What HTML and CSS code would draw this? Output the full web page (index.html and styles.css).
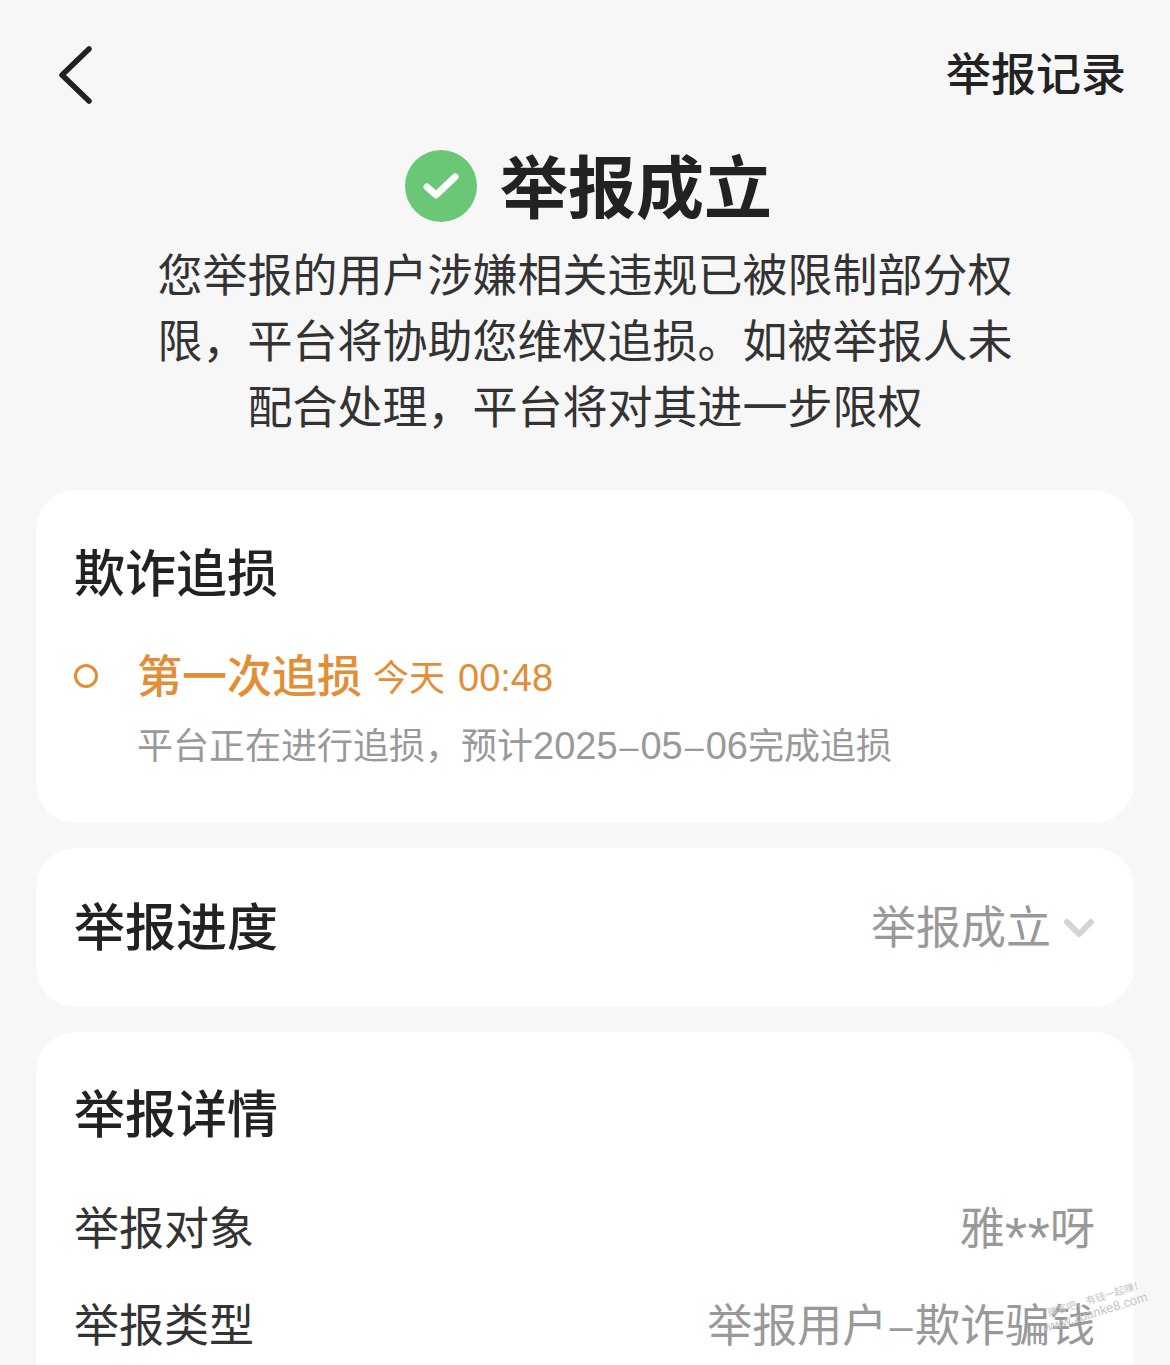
FILE: index.html
```html
<!DOCTYPE html>
<html lang="zh-CN">
<head>
    <meta charset="UTF-8">
    <title>举报成立</title>
    <link rel="stylesheet" href="styles.css">
</head>
<body>
    <div class="page">
        <div class="topbar">
            <svg class="back" width="36" height="60" viewBox="0 0 36 60">
                <path d="M32 4 L5 30 L32 56" fill="none" stroke="#222" stroke-width="5.5" stroke-linecap="round" stroke-linejoin="round"/>
            </svg>
            <span class="records">举报记录</span>
        </div>

        <div class="result">
            <svg width="72" height="72" viewBox="0 0 72 72">
                <circle cx="36" cy="36" r="36" fill="#69c776"/>
                <path d="M22 37 L31 45 L50 27" fill="none" stroke="#fff" stroke-width="7" stroke-linecap="round" stroke-linejoin="round"/>
            </svg>
            <h1>举报成立</h1>
        </div>
        <p class="desc">您举报的用户涉嫌相关违规已被限制部分权<br>限，平台将协助您维权追损。如被举报人未<br>配合处理，平台将对其进一步限权</p>

        <div class="card track">
            <h2>欺诈追损</h2>
            <div class="step">
                <span class="dot"></span>
                <span class="step-name">第一次追损</span>
                <span class="step-time">今天 <span class="digits clock">00:48</span></span>
            </div>
            <div class="step-note">平台正在进行追损，预计<span class="digits">2025<span class="date-dash">–</span>05<span class="date-dash">–</span>06</span>完成追损</div>
        </div>

        <div class="card progress">
            <h2>举报进度</h2>
            <div class="progress-val">
                <span class="progress-text">举报成立</span>
                <svg width="32" height="22" viewBox="0 0 32 22">
                    <path d="M4 5 L16 17 L28 5" fill="none" stroke="#d4d4d4" stroke-width="6" stroke-linecap="round" stroke-linejoin="round"/>
                </svg>
            </div>
        </div>

        <div class="card details">
            <h2>举报详情</h2>
            <div class="row"><span>举报对象</span><span class="val">雅<span class="stars">**</span>呀</span></div>
            <div class="row"><span>举报类型</span><span class="val">举报用户<span class="dash">–</span>欺诈骗钱</span></div>
        </div>

        <div class="mark"><span class="mark-top">赚客吧，有钱一起赚！</span><br>www.zuanke8.com</div>
    </div>
</body>
</html>
```

FILE: styles.css
```css
* {
    box-sizing: border-box;
}
html, body {
    margin: 0;
    padding: 0;
}
body {
    font-family: "Liberation Sans", "Noto Sans CJK SC", sans-serif;
    background-color: #f7f7f7;
    color: #222;
}
.page {
    position: relative;
    height: 1365px;
    overflow: hidden;
    padding: 0 36px;
}
.topbar {
    display: flex;
    justify-content: space-between;
    align-items: center;
    height: 60px;
    margin-top: 45px;
    padding: 0 8px 0 21px;
}
.records {
    font-size: 45px;
    font-weight: 500;
    padding-bottom: 8px;
}
.result {
    display: flex;
    justify-content: center;
    align-items: center;
    gap: 23px;
    margin-top: 45px;
    height: 72px;
    padding-left: 7px;
}
.result h1 {
    margin: 0;
    padding-top: 6px;
    font-size: 68px;
    font-weight: 700;
    line-height: 72px;
}
.desc {
    margin: 22px 0 0;
    text-align: center;
    font-size: 45px;
    line-height: 66px;
    color: #333;
}
.card {
    background-color: white;
    border-radius: 40px;
    padding: 0 39px 0 38px;
    margin-top: 25px;
}
.card h2 {
    margin: 0;
    font-size: 51px;
    font-weight: 500;
    line-height: 60px;
}
.track {
    height: 333px;
    margin-top: 48px;
    padding-top: 55px;
}
.step {
    display: flex;
    align-items: center;
    margin-top: 39px;
    height: 58px;
}
.dot {
    width: 24px;
    height: 24px;
    margin-top: 5px;
    border: 3px solid #e38d36;
    border-radius: 50%;
}
.step-name {
    margin-left: 39px;
    font-size: 45px;
    font-weight: 500;
    color: #e38d36;
}
.step-time {
    margin-left: 11px;
    padding-top: 4px;
    font-size: 36px;
    color: #e38d36;
}
.digits {
    font-size: 38px;
}
.clock {
    margin-left: 3px;
}
.date-dash {
    margin: 0 2px;
    font-size: 34px;
    vertical-align: 1px;
}
.step-note {
    margin: 19px 0 0 63px;
    font-size: 36px;
    line-height: 50px;
    color: #999;
}
.progress {
    display: flex;
    justify-content: space-between;
    align-items: center;
    height: 159px;
}
.progress h2 {
    padding-top: 2px;
}
.progress-val {
    display: flex;
    align-items: center;
    gap: 12px;
    font-size: 45px;
    color: #999;
}
.progress-text {
    padding-bottom: 6px;
}
.details {
    height: 400px;
    padding-top: 54px;
}
.row {
    display: flex;
    justify-content: space-between;
    align-items: center;
    height: 97px;
    font-size: 45px;
    color: #333;
}
.details h2 + .row {
    margin-top: 31px;
}
.val {
    color: #999;
}
.stars {
    font-size: 58px;
    line-height: 0;
    vertical-align: -13px;
}
.dash {
    margin: 0 2.500px;
    font-size: 41px;
    vertical-align: 2px;
}
.mark {
    position: absolute;
    left: 1039px;
    top: 1292px;
    font-size: 13px;
    line-height: 13px;
    color: #c4c4c4;
    white-space: nowrap;
    text-align: right;
    transform: rotate(-17deg);
}
.mark-top {
    font-size: 10px;
}
```
